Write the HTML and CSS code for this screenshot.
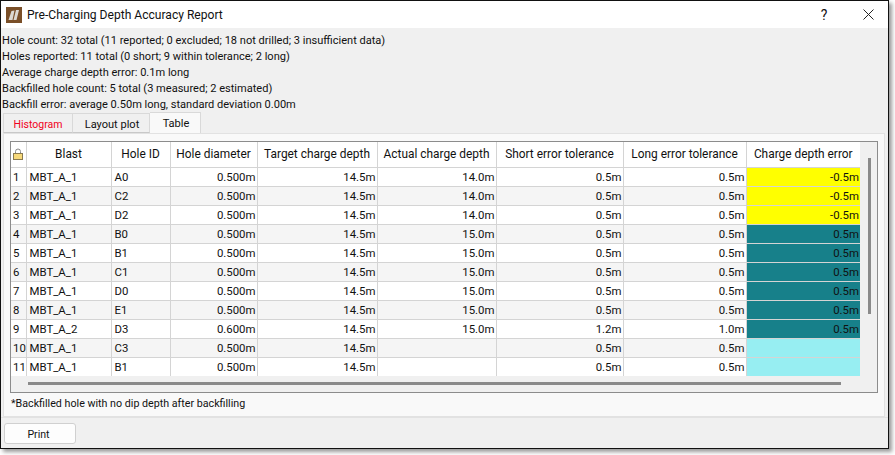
FILE: index.html
```html
<!DOCTYPE html>
<html lang="en">
<head>
<meta charset="utf-8">
<title>Pre-Charging Depth Accuracy Report</title>
<link rel="stylesheet" href="styles.css">
</head>
<body>
<div class="window">
  <header class="titlebar">
    <svg class="app-icon" viewBox="0 0 16 16" width="16" height="16" aria-hidden="true">
      <rect width="16" height="16" fill="#7a4f28"/>
      <path d="M2.5 13 L5.5 4 L8.5 3.5 L6.5 13Z M7.5 13 L10 3 L13 3 L10.5 13Z" fill="#dcd8d2"/>
    </svg>
    <span class="title">Pre-Charging Depth Accuracy Report</span>
    <span class="help">?</span>
    <svg class="close" viewBox="0 0 11 11" width="11" height="11" aria-hidden="true">
      <path d="M0.5 0.5 L10.5 10.5 M10.5 0.5 L0.5 10.5" stroke="#222" stroke-width="1" fill="none"/>
    </svg>
  </header>
  <section class="summary">
    <div>Hole count: 32 total (11 reported; 0 excluded; 18 not drilled; 3 insufficient data)</div>
    <div>Holes reported: 11 total (0 short; 9 within tolerance; 2 long)</div>
    <div>Average charge depth error: 0.1m long</div>
    <div>Backfilled hole count: 5 total (3 measured; 2 estimated)</div>
    <div>Backfill error: average 0.50m long, standard deviation 0.00m</div>
  </section>
  <nav class="tabs">
    <span class="tab tab-hist">Histogram</span>
    <span class="tab tab-layout">Layout plot</span>
    <span class="tab tab-table">Table</span>
  </nav>
  <section class="pane">
    <div class="frame">
      <table class="grid">
        <colgroup>
          <col class="c0"><col class="c1"><col class="c2"><col class="c3"><col class="c4">
          <col class="c5"><col class="c6"><col class="c7"><col class="c8">
        </colgroup>
        <thead>
          <tr>
            <th><svg class="lock" viewBox="0 0 10 12" width="10" height="12" aria-hidden="true"><path d="M2.5 5.5 V3.5 a2.5 2.5 0 0 1 5 0 V5.5" fill="none" stroke="#8a8a8a" stroke-width="1"/><rect x="0.5" y="5.5" width="9" height="6" fill="#f7d97a" stroke="#8a7a50"/></svg></th>
            <th>Blast</th><th>Hole ID</th><th>Hole diameter</th><th>Target charge depth</th><th>Actual charge depth</th><th>Short error tolerance</th><th>Long error tolerance</th><th>Charge depth error</th>
          </tr>
        </thead>
        <tbody>
          <tr><td>1</td><td>MBT_A_1</td><td>A0</td><td class="n">0.500m</td><td class="n">14.5m</td><td class="n">14.0m</td><td class="n">0.5m</td><td class="n">0.5m</td><td class="n short">-0.5m</td></tr>
          <tr><td>2</td><td>MBT_A_1</td><td>C2</td><td class="n">0.500m</td><td class="n">14.5m</td><td class="n">14.0m</td><td class="n">0.5m</td><td class="n">0.5m</td><td class="n short">-0.5m</td></tr>
          <tr><td>3</td><td>MBT_A_1</td><td>D2</td><td class="n">0.500m</td><td class="n">14.5m</td><td class="n">14.0m</td><td class="n">0.5m</td><td class="n">0.5m</td><td class="n short">-0.5m</td></tr>
          <tr><td>4</td><td>MBT_A_1</td><td>B0</td><td class="n">0.500m</td><td class="n">14.5m</td><td class="n">15.0m</td><td class="n">0.5m</td><td class="n">0.5m</td><td class="n long">0.5m</td></tr>
          <tr><td>5</td><td>MBT_A_1</td><td>B1</td><td class="n">0.500m</td><td class="n">14.5m</td><td class="n">15.0m</td><td class="n">0.5m</td><td class="n">0.5m</td><td class="n long">0.5m</td></tr>
          <tr><td>6</td><td>MBT_A_1</td><td>C1</td><td class="n">0.500m</td><td class="n">14.5m</td><td class="n">15.0m</td><td class="n">0.5m</td><td class="n">0.5m</td><td class="n long">0.5m</td></tr>
          <tr><td>7</td><td>MBT_A_1</td><td>D0</td><td class="n">0.500m</td><td class="n">14.5m</td><td class="n">15.0m</td><td class="n">0.5m</td><td class="n">0.5m</td><td class="n long">0.5m</td></tr>
          <tr><td>8</td><td>MBT_A_1</td><td>E1</td><td class="n">0.500m</td><td class="n">14.5m</td><td class="n">15.0m</td><td class="n">0.5m</td><td class="n">0.5m</td><td class="n long">0.5m</td></tr>
          <tr><td>9</td><td>MBT_A_2</td><td>D3</td><td class="n">0.600m</td><td class="n">14.5m</td><td class="n">15.0m</td><td class="n">1.2m</td><td class="n">1.0m</td><td class="n long">0.5m</td></tr>
          <tr><td>10</td><td>MBT_A_1</td><td>C3</td><td class="n">0.500m</td><td class="n">14.5m</td><td class="n"></td><td class="n">0.5m</td><td class="n">0.5m</td><td class="n none"></td></tr>
          <tr><td>11</td><td>MBT_A_1</td><td>B1</td><td class="n">0.500m</td><td class="n">14.5m</td><td class="n"></td><td class="n">0.5m</td><td class="n">0.5m</td><td class="n none"></td></tr>
        </tbody>
      </table>
      <div class="vbar"></div>
      <div class="hbar"></div>
    </div>
    <p class="note">*Backfilled hole with no dip depth after backfilling</p>
  </section>
  <footer class="actions">
    <button class="print" type="button">Print</button>
  </footer>
</div>
</body>
</html>
```
FILE: styles.css
```css
* { box-sizing: border-box; }
html, body { margin: 0; padding: 0; background: #fff; }
body { width: 895px; height: 455px; overflow: hidden; font-family: "Roboto", "Noto Sans", sans-serif; font-size: 11.05px; color: #111; }
.window { width: 889px; height: 449px; border: 1px solid #111; background: #f0f0f0; display: flex; flex-direction: column; box-shadow: 3px 3px 4px rgba(0,0,0,.4); }
.titlebar { height: 27px; background: #fff; display: flex; align-items: center; padding-left: 5px; flex: none; }
.app-icon { flex: none; }
.title { margin-left: 5px; font-size: 12.08px; flex: 1; color: #111; }
.help { width: 16px; font-size: 14px; text-align: center; margin-right: 31px; }
.close { margin-right: 14px; flex: none; }
.summary { padding: 5px 0 0 1px; height: 85px; line-height: 16px; flex: none; }
.tabs { display: flex; height: 20px; padding-left: 2px; flex: none; }
.tab { display: flex; align-items: center; justify-content: center; border: 1px solid #d9d9d9; border-bottom-color: #c8c8c8; background: #f0f0f0; padding-top: 2px; }
.tab-hist { width: 70px; color: #f00020; font-size: 10.5px; }
.tab-layout { width: 77px; border-left: 0; padding-left: 2px; }
.tab-table { width: 51px; background: #f9f9f9; border-left: 0; border-bottom: 0; height: 21px; margin-top: -1px; padding-top: 0; padding-left: 2px; position: relative; z-index: 1; }
.pane { margin-left: 2px; width: 882px; height: 284px; background: #f9f9f9; border: 1px solid #e2e2e2; padding: 7px 6px 0 6px; flex: none; }
.frame { position: relative; width: 868px; height: 252px; border: 1px solid #8c8c8c; background: #f0f0f0; }
.grid { border-collapse: collapse; table-layout: fixed; width: 849px; }
.c0 { width: 15px; } .c1 { width: 85px; } .c2 { width: 59px; } .c3 { width: 87px; } .c4 { width: 120px; }
.c5 { width: 119px; } .c6 { width: 127px; } .c7 { width: 123px; } .c8 { width: 114px; }
.grid th { height: 25px; background: #fff; font-weight: 400; font-size: 11.9px; border-right: 1px solid #d4d4d4; border-bottom: 1px solid #d4d4d4; padding: 0; text-align: center; }
.grid th:last-child { border-right: 0; }
.grid td { height: 19px; font-size: 11.4px; padding: 1px 1px 0 2px; border-right: 1px solid #d4d4d4; border-bottom: 1px solid #d4d4d4; background: #fff; white-space: nowrap; overflow: hidden; }
.grid td:nth-child(2), .grid td:nth-child(3) { padding-left: 3px; }
.grid tbody tr:nth-child(even) td { background: #f5f5f5; }
.grid td:last-child { border-right: 0; }
.grid tr:last-child td { border-bottom: 0; }
.grid td.n { text-align: right; }
.grid tbody tr td.short { background: #ffff00; }
.grid tbody tr td.long { background: #17808a; }
.grid tbody tr td.none { background: #97eef2; }
.lock { display: block; margin: 0 auto; }
.vbar { position: absolute; left: 857px; top: 16px; width: 3px; height: 156px; background: #8a8a8a; }
.hbar { position: absolute; left: 17px; top: 240px; width: 813px; height: 3px; background: #8a8a8a; }
.note { margin: 3px 0 0 1px; line-height: 16px; font-size: 10.7px; }
.actions { padding: 5px 0 0 3px; border-top: 1px solid #e2e2e2; margin-top: 0; flex: 1; }
.print { display: block; width: 72px; height: 21px; font: inherit; font-size: 10.6px; color: inherit; background: #fdfdfd; border: 1px solid #d0d0d0; border-radius: 3px; padding: 1px 3px 0 0; }
```
